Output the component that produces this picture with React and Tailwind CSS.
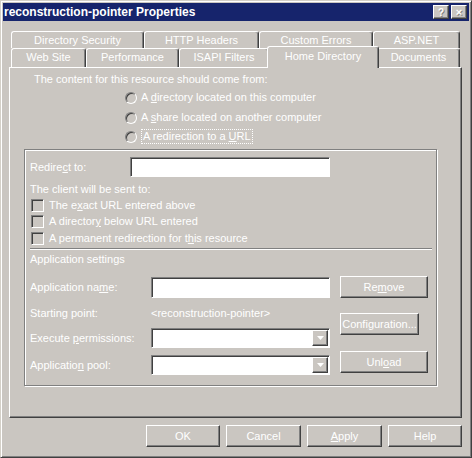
import React from 'react';

const raised =
  'border border-white border-r-[#404040] border-b-[#404040] shadow-[inset_-1px_-1px_0_#808080]';
const sunken =
  'border border-[#808080] border-r-white border-b-white shadow-[inset_1px_1px_0_#404040]';

const Tab = ({ label, w, active }) => (
  <div
    className={`flex justify-center border-l border-t border-r border-white border-r-[#404040] shadow-[inset_-1px_0_0_#808080] rounded-t-[3px] ${
      active ? 'relative z-10 -mx-[2px] -mt-[2px] h-[22px] pt-[3px] bg-[#cac6c1]' : 'h-full pt-[2px]'
    }`}
    style={{ width: active ? w + 4 : w }}>
    {label}
  </div>
);

const Radio = ({ children, focus }) => (
  <div className="flex items-center h-[13px] pl-[115px] gap-[4px]">
    <div className={`w-[12px] h-[12px] rounded-full bg-[#cac6c1] ${sunken}`} />
    <span className={focus ? 'border border-dotted border-white px-[1px]' : ''}>{children}</span>
  </div>
);

const Check = ({ children, mt }) => (
  <div className={`flex items-center h-[13px] pl-[6px] gap-[5px] ${mt}`}>
    <div className={`w-[13px] h-[13px] bg-[#cac6c1] ${sunken}`} />
    <span>{children}</span>
  </div>
);

const Button = ({ children, w, className = '' }) => (
  <div className={`h-[22px] flex items-center justify-center ${raised} ${className}`} style={{ width: w }}>
    {children}
  </div>
);

const Combo = () => (
  <div className={`w-[179px] h-[20px] bg-white flex justify-end items-center pr-[1px] ${sunken}`}>
    <div className={`w-[16px] h-[16px] bg-[#cac6c1] flex items-center justify-center ${raised}`}>
      <svg width="7" height="4" viewBox="0 0 7 4">
        <polygon points="0,0 7,0 3.5,4" fill="#ffffff" />
      </svg>
    </div>
  </div>
);

const U = ({ children }) => <span className="underline">{children}</span>;

export default function App() {
  return (
    <div className="w-[472px] h-[458px] bg-[#cac6c1] font-['Liberation_Sans',Arial,sans-serif] text-[11px] leading-[13px] text-white border border-[#d4d0c8] border-r-[#404040] border-b-[#404040] shadow-[inset_1px_1px_0_white,inset_-1px_-1px_0_#808080] p-[2px] flex flex-col overflow-hidden">
      {/* title bar */}
      <div className="h-[18px] bg-[#16246c] flex items-center pl-[1px] pr-[2px]">
        <span className="font-bold text-[12px] flex-1">reconstruction-pointer Properties</span>
        <div className={`w-[16px] h-[14px] bg-[#cac6c1] flex items-center justify-center font-bold text-[10px] [text-shadow:1px_1px_0_#808080] ${raised}`}>
          ?
        </div>
        <div className={`ml-[2px] w-[16px] h-[14px] bg-[#cac6c1] flex items-center justify-center font-bold text-[11px] [text-shadow:1px_1px_0_#808080] ${raised}`}>
          ×
        </div>
      </div>

      {/* tabs */}
      <div className="mt-[10px] ml-[8px] flex h-[17px]">
        <Tab label="Directory Security" w={133} />
        <Tab label="HTTP Headers" w={115} />
        <Tab label="Custom Errors" w={114} />
        <Tab label="ASP.NET" w={87} />
      </div>
      <div className="ml-[8px] flex h-[19px]">
        <Tab label="Web Site" w={75} />
        <Tab label="Performance" w={93} />
        <Tab label="ISAPI Filters" w={90} />
        <Tab label="Home Directory" w={108} active />
        <Tab label="Documents" w={83} />
      </div>

      {/* panel */}
      <div className="ml-[6px] w-[453px] h-[351px] border border-white border-r-[#404040] border-b-[#404040] shadow-[inset_-1px_-1px_0_#808080] flex flex-col">
        <div className="mt-[5px] pl-[24px] h-[13px]">The content for this resource should come from:</div>
        <div className="mt-[5px]">
          <Radio>
            A <U>d</U>irectory located on this computer
          </Radio>
        </div>
        <div className="mt-[7px]">
          <Radio>
            A <U>s</U>hare located on another computer
          </Radio>
        </div>
        <div className="mt-[6px]">
          <Radio focus>
            A redirection to a <U>U</U>RL
          </Radio>
        </div>

        {/* group */}
        <div className="mt-[6px] ml-[14px] w-[413px] h-[237px] border border-[#808080] shadow-[inset_1px_1px_0_white,1px_1px_0_white] flex flex-col">
          <div className="mt-[7px] flex items-center h-[20px]">
            <span className="w-[105px] pl-[5px]">
              Redire<U>c</U>t to:
            </span>
            <div className={`w-[200px] h-[20px] bg-white ${sunken}`} />
          </div>
          <div className="mt-[6px] pl-[5px] h-[13px]">The client will be sent to:</div>
          <Check mt="mt-[3px]">
            The e<U>x</U>act URL entered above
          </Check>
          <Check mt="mt-[3px]">
            A director<U>y</U> below URL entered
          </Check>
          <Check mt="mt-[4px]">
            A permanent redirection for t<U>h</U>is resource
          </Check>
          <div className="mt-[3px] ml-[5px] w-[402px] h-[2px] border-t border-[#808080] border-b border-b-white" />
          <div className="mt-[3px] pl-[5px] h-[13px]">Application settings</div>

          <div className="mt-[10px] flex">
            <div className="flex flex-col">
              <div className="flex items-center h-[22px]">
                <span className="w-[126px] pl-[5px]">
                  Application na<U>m</U>e:
                </span>
                <div className={`w-[179px] h-[21px] bg-white ${sunken}`} />
              </div>
              <div className="mt-[9px] flex items-center h-[13px]">
                <span className="w-[126px] pl-[5px]">Starting point:</span>
                <span>&lt;reconstruction-pointer&gt;</span>
              </div>
              <div className="mt-[8px] flex items-center h-[20px]">
                <span className="w-[126px] pl-[5px]">
                  Execute <U>p</U>ermissions:
                </span>
                <Combo />
              </div>
              <div className="mt-[7px] flex items-center h-[20px]">
                <span className="w-[126px] pl-[5px]">
                  Applicatio<U>n</U> pool:
                </span>
                <Combo />
              </div>
            </div>
            <div className="ml-[10px] flex flex-col">
              <Button w={88}>
                Re<U>m</U>ove
              </Button>
              <Button w={79} className="mt-[15px]">
                Confi<U>g</U>uration...
              </Button>
              <Button w={88} className="mt-[16px]">
                Unl<U>o</U>ad
              </Button>
            </div>
          </div>
        </div>
      </div>

      {/* bottom buttons */}
      <div className="mt-[7px] flex justify-end gap-[6px] pr-[7px]">
        <Button w={74}>OK</Button>
        <Button w={75}>Cancel</Button>
        <Button w={75}>
          <U>A</U>pply
        </Button>
        <Button w={74}>Help</Button>
      </div>
    </div>
  );
}
